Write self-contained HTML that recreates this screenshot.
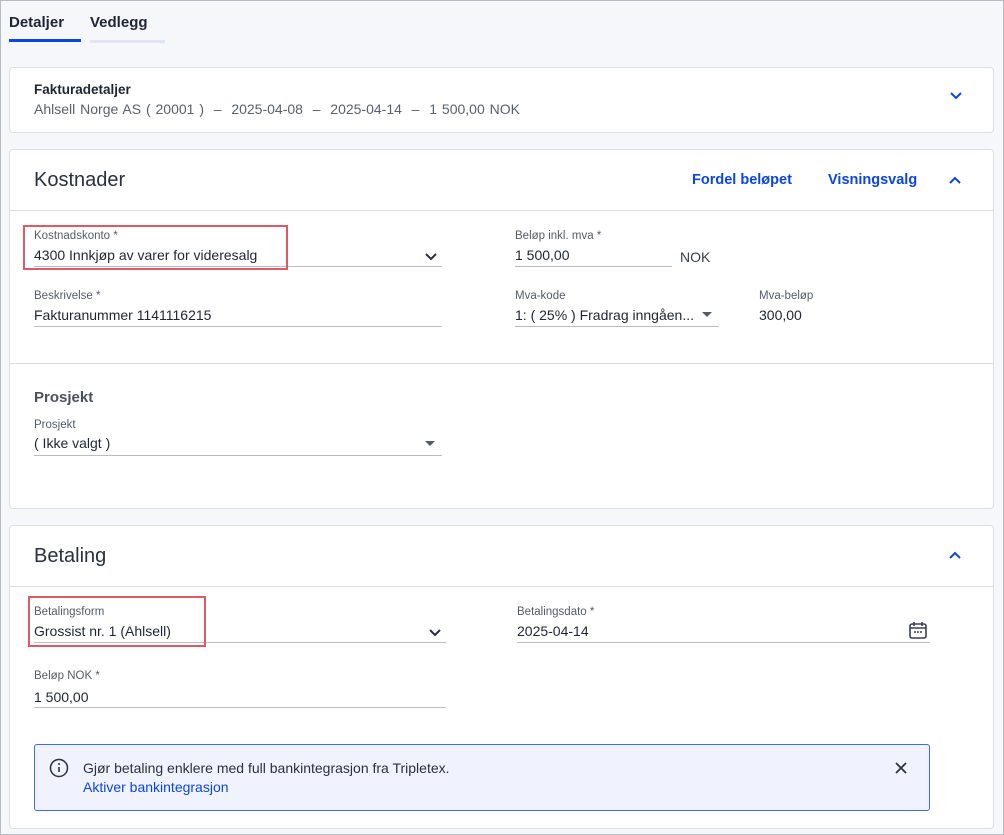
<!DOCTYPE html>
<html><head><meta charset="utf-8"><style>
*{box-sizing:border-box;margin:0;padding:0}
body{width:1004px;height:835px;background:#f6f7fb;font-family:"Liberation Sans",sans-serif;color:#1f2533;position:relative;overflow:hidden}
.frame{position:absolute;left:0;top:0;width:1004px;height:835px;border:1px solid #b8bbc2;pointer-events:none}
.a{position:absolute;white-space:nowrap}
.card{position:absolute;background:#fff;border:1px solid #dcdee3;border-radius:4px}
.lbl{font-size:11.5px;color:#555b66}
.val{font-size:14px;color:#1f2533}
.line{position:absolute;height:1px;background:#b9bcc3}
.div{position:absolute;height:1px;background:#dcdee3}
.blue{color:#0a45e6;font-weight:bold;font-size:14.5px}
.red{position:absolute;border:2px solid #e05a66}
</style></head><body>
<div class="a" style="left:9px;top:14px;font-size:15px;font-weight:bold">Detaljer</div>
<div class="a" style="left:90px;top:14px;font-size:15px;font-weight:bold">Vedlegg</div>
<div class="a" style="left:9px;top:39px;width:72px;height:3px;background:#0a45e6"></div>
<div class="a" style="left:90px;top:40px;width:75px;height:3px;background:#dfe5f5"></div>

<div class="card" style="left:9px;top:67px;width:985px;height:66px"></div>
<div class="a" style="left:34px;top:82px;font-size:13.5px;font-weight:bold">Fakturadetaljer</div>
<div class="a" style="left:34px;top:101px;font-size:14px;color:#5a606b;word-spacing:1px">Ahlsell Norge AS ( 20001 ) &nbsp;–&nbsp; 2025-04-08 &nbsp;–&nbsp; 2025-04-14 &nbsp;–&nbsp; 1 500,00 NOK</div>
<svg class="a" style="left:949px;top:91px" width="14" height="10" viewBox="0 0 14 10"><path d="M2 2l5 5 5-5" fill="none" stroke="#0a45e6" stroke-width="2"/></svg>

<div class="card" style="left:9px;top:149px;width:985px;height:360px"></div>
<div class="a" style="left:34px;top:169px;font-size:20px;color:#2a303c">Kostnader</div>
<div class="a blue" style="left:692px;top:172px">Fordel beløpet</div>
<div class="a blue" style="left:828px;top:172px">Visningsvalg</div>
<svg class="a" style="left:948px;top:175px" width="14" height="10" viewBox="0 0 14 10"><path d="M2 8l5-5 5 5" fill="none" stroke="#0a45e6" stroke-width="2"/></svg>
<div class="div" style="left:10px;top:210px;width:983px"></div>

<div class="a lbl" style="left:34px;top:230px">Kostnadskonto *</div>
<div class="a val" style="left:34px;top:247px">4300 Innkjøp av varer for videresalg</div>
<svg class="a" style="left:424px;top:252px" width="14" height="10" viewBox="0 0 14 10"><path d="M2 2l5 5 5-5" fill="none" stroke="#2a303c" stroke-width="2"/></svg>
<div class="line" style="left:34px;top:266px;width:408px"></div>
<div class="red" style="left:23px;top:225px;width:265px;height:45px"></div>

<div class="a lbl" style="left:515px;top:230px">Beløp inkl. mva *</div>
<div class="a val" style="left:515px;top:247px">1 500,00</div>
<div class="line" style="left:515px;top:266px;width:157px"></div>
<div class="a val" style="left:680px;top:249px;color:#3a404b">NOK</div>

<div class="a lbl" style="left:34px;top:290px">Beskrivelse *</div>
<div class="a val" style="left:34px;top:307px">Fakturanummer 1141116215</div>
<div class="line" style="left:34px;top:326px;width:408px"></div>

<div class="a lbl" style="left:515px;top:290px">Mva-kode</div>
<div class="a val" style="left:515px;top:307px">1: ( 25% ) Fradrag inngåen...</div>
<svg class="a" style="left:701px;top:311px" width="12" height="7" viewBox="0 0 12 7"><path d="M1 1h10L6 6z" fill="#555b66"/></svg>
<div class="line" style="left:515px;top:326px;width:204px"></div>
<div class="a lbl" style="left:759px;top:290px">Mva-beløp</div>
<div class="a val" style="left:759px;top:307px">300,00</div>

<div class="div" style="left:10px;top:363px;width:983px"></div>
<div class="a" style="left:34px;top:389px;font-size:15px;font-weight:bold;color:#4a505b">Prosjekt</div>
<div class="a lbl" style="left:34px;top:419px">Prosjekt</div>
<div class="a val" style="left:34px;top:435px">( Ikke valgt )</div>
<svg class="a" style="left:424px;top:440px" width="12" height="7" viewBox="0 0 12 7"><path d="M1 1h10L6 6z" fill="#555b66"/></svg>
<div class="line" style="left:34px;top:455px;width:408px"></div>

<div class="card" style="left:9px;top:525px;width:985px;height:304px"></div>
<div class="a" style="left:34px;top:545px;font-size:20px;color:#2a303c">Betaling</div>
<svg class="a" style="left:948px;top:550px" width="14" height="10" viewBox="0 0 14 10"><path d="M2 8l5-5 5 5" fill="none" stroke="#0a45e6" stroke-width="2"/></svg>
<div class="div" style="left:10px;top:586px;width:983px"></div>

<div class="a lbl" style="left:34px;top:606px">Betalingsform</div>
<div class="a val" style="left:34px;top:623px">Grossist nr. 1 (Ahlsell)</div>
<svg class="a" style="left:428px;top:628px" width="14" height="10" viewBox="0 0 14 10"><path d="M2 2l5 5 5-5" fill="none" stroke="#2a303c" stroke-width="2"/></svg>
<div class="line" style="left:34px;top:642px;width:412px"></div>
<div class="red" style="left:28px;top:596px;width:178px;height:51px"></div>

<div class="a lbl" style="left:517px;top:606px">Betalingsdato *</div>
<div class="a val" style="left:517px;top:623px">2025-04-14</div>
<svg class="a" style="left:908px;top:620px" width="20" height="20" viewBox="0 0 20 20"><rect x="2" y="4" width="16" height="14" rx="2" fill="none" stroke="#3a404b" stroke-width="1.6"/><path d="M2 8h16M6 2v4M14 2v4" stroke="#3a404b" stroke-width="1.6"/><path d="M6 12h2M9 12h2M12 12h2" stroke="#3a404b" stroke-width="1.5"/></svg>
<div class="line" style="left:517px;top:642px;width:413px"></div>

<div class="a lbl" style="left:34px;top:670px">Beløp NOK *</div>
<div class="a val" style="left:34px;top:689px">1 500,00</div>
<div class="line" style="left:34px;top:707px;width:412px"></div>

<div class="a" style="left:34px;top:744px;width:896px;height:67px;background:#f0f3fd;border:1px solid #3d6cf0;border-radius:3px"></div>
<svg class="a" style="left:49px;top:758px" width="20" height="20" viewBox="0 0 20 20"><circle cx="10" cy="10" r="8.5" fill="none" stroke="#2a303c" stroke-width="1.5"/><path d="M10 9v5" stroke="#2a303c" stroke-width="1.6"/><circle cx="10" cy="6" r="1" fill="#2a303c"/></svg>
<div class="a" style="left:83px;top:760px;font-size:14px;color:#2a303c">Gjør betaling enklere med full bankintegrasjon fra Tripletex.</div>
<div class="a" style="left:83px;top:779px;font-size:14px;color:#0a45e6">Aktiver bankintegrasjon</div>
<svg class="a" style="left:894px;top:761px" width="14" height="14" viewBox="0 0 14 14"><path d="M2 2l10 10M12 2L2 12" stroke="#2a303c" stroke-width="1.8"/></svg>
<div class="frame"></div>
</body></html>
